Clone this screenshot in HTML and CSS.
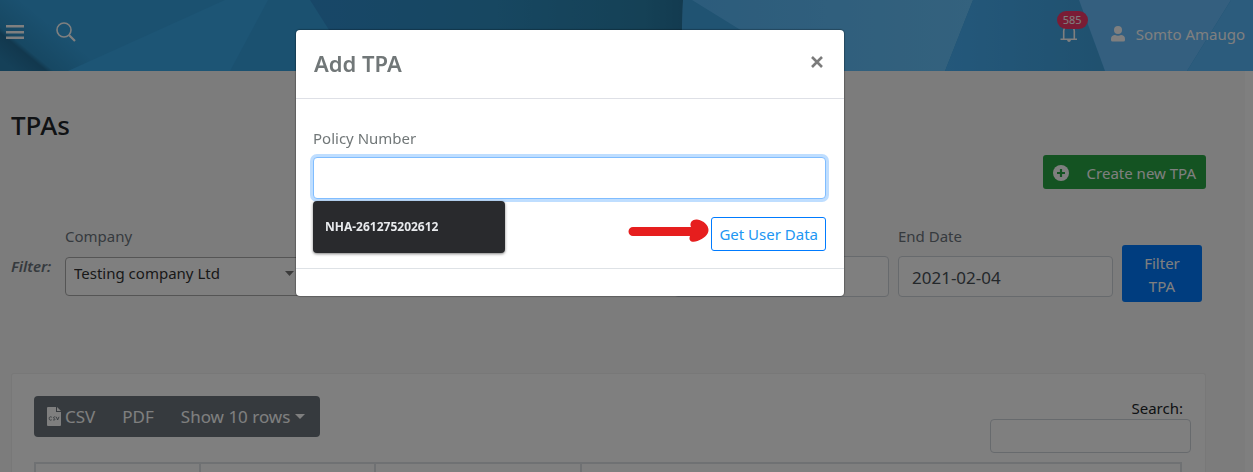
FILE: index.html
```html
<!DOCTYPE html>
<html lang="en">
<head>
<meta charset="utf-8">
<meta name="viewport" content="width=device-width, initial-scale=1">
<title>TPAs</title>
<link rel="stylesheet" href="styles.css">
</head>
<body>
<header class="topbar">
  <svg class="topbar-art" viewBox="0 0 1253 71" preserveAspectRatio="none" aria-hidden="true">
    <defs>
      <linearGradient id="dark"><stop offset="0" stop-color="#308ed0"/><stop offset=".5" stop-color="#2e8ec2"/><stop offset=".9" stop-color="#2a82ac"/><stop offset="1" stop-color="#2676a0"/></linearGradient>
      <linearGradient id="pale"><stop offset="0" stop-color="#58b8f8"/><stop offset="1" stop-color="#68c4fc"/></linearGradient>
      <linearGradient id="blue"><stop offset="0" stop-color="#48b0f6"/><stop offset="1" stop-color="#40a2de"/></linearGradient>
      <linearGradient id="shadow" gradientUnits="userSpaceOnUse" x1="10" y1="66" x2="46" y2="22"><stop offset="0" stop-color="#2a80b0"/><stop offset=".34" stop-color="#24709c"/><stop offset=".42" stop-color="#2e90c6"/><stop offset="1" stop-color="#36a2e0"/></linearGradient>
    </defs>
    <rect width="1253" height="71" fill="#36a2e0"/>
    <path d="M0 0H90V71H0z" fill="url(#shadow)"/>
    <path d="M225 0h43l-38 71H68z" fill="#3aaaea"/>
    <path d="M310 0h373v71H355z" fill="url(#dark)"/>
    <path d="M683 0h290l-28 71H681z" fill="url(#pale)"/>
    <path d="M683 0h9l115 71H681z" fill="#40a6e4"/>
    <path d="M973 0h106l26 71H945z" fill="url(#blue)"/>
    <path d="M1079 0h152l-44 71h-82z" fill="#68beff"/>
    <path d="M1231 0h22v71h-66z" fill="#58b8fa"/>
  </svg>
  <nav class="topbar-tools">
    <button class="icon-button" aria-label="Menu">
      <svg width="18" height="14" viewBox="0 0 18 14" fill="#fff"><path d="M0 0h18v2.400H0zM0 6h18v2.400H0zM0 11.600h18V14H0z"/></svg>
    </button>
    <button class="icon-button" aria-label="Search">
      <svg width="20" height="20" viewBox="0 0 20 20" fill="none" stroke="#fff" stroke-width="1.600"><circle cx="8" cy="8" r="7"/><path d="m13 13 6 6" stroke-width="2.200"/></svg>
    </button>
  </nav>
  <div class="topbar-user">
    <button class="icon-button bell" aria-label="Notifications">
      <svg width="18" height="20" viewBox="0 0 18 20" fill="none" stroke="#fff" stroke-width="1.600"><path d="M.5 15.200h16.500M3.700 15V7a5.300 5.300 0 0 1 10.600 0v8"/><path d="M7 16h4q-.5 2-2 2t-2-2z" fill="#fff" stroke="none"/></svg>
      <span class="badge">585</span>
    </button>
    <a class="user-link" href="#">
      <svg width="14" height="16" viewBox="0 0 14 16" fill="#fff"><circle cx="7" cy="4" r="4"/><path d="M0 13c0-3 2-4 4-4 2 1 4 1 6 0 2 0 4 1 4 4v1q0 1.500-1.500 1.500h-11Q0 15.500 0 14z"/></svg>
      <span>Somto Amaugo</span>
    </a>
  </div>
</header>

<main class="page">
  <h1 class="page-title">TPAs</h1>
  <div class="actions">
    <button class="create-button">
      <svg width="16" height="16" viewBox="0 0 16 16"><circle cx="8" cy="8" r="8" fill="#fff"/><path d="M8 4v8M4 8h8" stroke="#28a745" stroke-width="2.200"/></svg>
      <span>Create new TPA</span>
    </button>
  </div>

  <form class="filters">
    <span class="filters-title">Filter:</span>
    <div class="field company-field">
      <label for="company">Company</label>
      <select id="company" class="company-select"><option>Testing company Ltd</option></select>
    </div>
    <div class="field date-field unlabelled">
      <input class="date-input" type="text" aria-label="From">
    </div>
    <div class="field date-field">
      <label for="end">End Date</label>
      <input id="end" class="date-input" type="text" value="2021-02-04">
    </div>
    <button class="filter-button" type="button">Filter TPA</button>
  </form>

  <section class="card">
    <div class="card-tools">
      <div class="export-group">
        <button class="export-button">
          <svg width="14" height="19" viewBox="0 0 14 19"><path d="M0 1q0-1 1-1h8v5h5v13q0 1-1 1H1q-1 0-1-1z" fill="#fff"/><path d="m10 0 4 4h-4z" fill="#fff"/><g fill="none" stroke="#6c757d" stroke-width=".9"><path d="M4.800 10.200c-2-1-2.600 0-2.600 1.300s.8 2.200 2.500 1.300M8.400 10c-2-.6-2.600 1-1.200 1.500 1.600.6.800 2-1.200 1.300M9.300 9.800l1.300 3.200 1.400-3.200"/></g></svg>
          <span>CSV</span>
        </button>
        <button class="export-button">PDF</button>
        <button class="export-button rows">Show 10 rows <span class="caret"></span></button>
      </div>
      <div class="search">
        <label for="search">Search:</label>
        <input id="search" class="search-input" type="search">
      </div>
    </div>
    <table class="records">
      <thead><tr><th class="col-a"></th><th class="col-b"></th><th class="col-c"></th><th></th></tr></thead>
    </table>
  </section>
</main>

<div class="backdrop">
  <div class="modal" role="dialog" aria-modal="true" aria-labelledby="modal-title">
    <div class="modal-header">
      <h2 class="modal-title" id="modal-title">Add TPA</h2>
      <button class="close" aria-label="Close">
        <svg width="12" height="12" viewBox="0 0 12 12" stroke="#7b7b7b" stroke-width="2.600"><path d="m1 1 10 10M11 1 1 11"/></svg>
      </button>
    </div>
    <div class="modal-body">
      <label class="policy-label" for="policy">Policy Number</label>
      <div class="policy-box">
        <input id="policy" class="policy-input" type="text">
        <div class="suggestions">NHA-261275202612</div>
      </div>
      <div class="modal-actions">
        <svg class="arrow" width="82" height="26" viewBox="0 0 82 26" aria-hidden="true"><path d="M5 9h58C61 4 65 1 69 1.500c7 1 11.500 6 11.500 10.500 0 5-5 8.500-11 11C64 25 60 23 62 18H5a4.500 4.500 0 0 1 0-9z" fill="#e61e1e"/></svg>
        <button class="get-button">Get User Data</button>
      </div>
    </div>
    <div class="modal-footer"></div>
  </div>
</div>
</body>
</html>
```
FILE: styles.css
```css
* { box-sizing: border-box; }
body {
  display: flex;
  flex-direction: column;
  margin: 0;
  height: 100vh;
  overflow: hidden;
  background: #fff;
  color: #212529;
  font: 15px/22px "Noto Sans", "Segoe UI", sans-serif;
}
button, input, select { font: inherit; color: inherit; margin: 0; }
button { cursor: pointer; }

/* Top bar */
.topbar {
  position: relative;
  flex: none;
  height: 71px;
  display: flex;
  justify-content: space-between;
  padding: 0 8px 0 6px;
  color: #fff;
}
.topbar-art { position: absolute; inset: 0; width: 100%; height: 100%; }
.topbar-tools, .topbar-user { position: relative; display: flex; align-items: center; height: 64px; }
.topbar-tools { gap: 32px; }
.topbar-user { height: 68px; gap: 33px; }
.icon-button { display: flex; padding: 0; border: 0; background: none; }
.bell { position: relative; }
.badge {
  position: absolute;
  left: -3px;
  top: -13px;
  padding: 0 6px;
  border-radius: 9px;
  background: #f5386a;
  color: #fff;
  font-size: 11px;
  line-height: 18px;
}
.user-link { display: flex; align-items: center; gap: 11px; color: #fff; text-decoration: none; }

/* Page */
.page {
  display: flex;
  flex-direction: column;
  flex: 1;
  min-height: 0;
  overflow: hidden;
  margin-right: 8px;
  padding: 38px 39px 0 11px;
  background: #f9f9f9;
}
.page-title { margin: 0; font-size: 26px; line-height: 32px; font-weight: 500; }
.actions { display: flex; justify-content: flex-end; padding-top: 14px; }
.create-button {
  display: flex;
  align-items: center;
  gap: 18px;
  height: 34px;
  padding: 2px 10px 0;
  border: 0;
  border-radius: 3px;
  background: #28a745;
  color: #fff;
}

/* Filters */
.filters { display: flex; align-items: flex-start; padding: 36px 4px 0 0; color: #6c757d; gap: 9px; }
.filters-title { width: 45px; padding-top: 30px; font-weight: 600; font-style: italic; }
.field { display: flex; flex-direction: column; min-width: 0; }
.unlabelled { padding-top: 22px; }
.company-field { width: 240px; margin-right: auto; }
.company-select {
  height: 39px;
  margin-top: 10px;
  padding: 0 8px 7px;
  appearance: none;
  border: 1px solid #aaa;
  border-radius: 4px;
  background: #fff url("data:image/svg+xml,%3Csvg xmlns='http://www.w3.org/2000/svg' width='9' height='5'%3E%3Cpath d='M0 0h9L4.500 5z' fill='%23777'/%3E%3C/svg%3E") no-repeat right 10px top 13px;
  color: #333;
}
.date-field { width: 215px; }
.date-input {
  width: 100%;
  height: 41px;
  margin-top: 9px;
  padding: 1px 13px 0;
  border: 1px solid #ced4da;
  border-radius: 4px;
  background: #fff;
  color: #495057;
  font-size: 17px;
}
.filter-button {
  width: 80px;
  height: 57px;
  margin-top: 20px;
  padding: 2px 18px 0;
  border: 0;
  border-radius: 3px;
  background: #007bff;
  color: #fff;
  line-height: 23px;
}

/* Records */
.card {
  flex: 1;
  min-height: 0;
  overflow: hidden;
  margin-top: 71px;
  padding: 22px 14px 0 22px;
  border: 1px solid #f0f0f0;
  border-bottom: 0;
  border-radius: 3px 3px 0 0;
  background: #fff;
}
.card-tools { display: flex; justify-content: space-between; }
.export-group { display: flex; height: 41px; border-radius: 4px; background: #6c757d; }
.export-button {
  display: flex;
  align-items: center;
  gap: 4px;
  padding: 0 14px 0 13px;
  border: 0;
  background: none;
  color: #fff;
  font-size: 17px;
}
.rows { gap: 5px; padding-right: 15px; }
.caret { border: 5px solid transparent; border-top-color: #fff; border-bottom: 0; }
.search { display: flex; flex-direction: column; align-items: flex-end; padding-top: 1px; }
.search label { padding-right: 8px; }
.search-input { width: 201px; height: 34px; border: 1px solid #ced4da; border-radius: 4px; background: #fff; }
.records { width: calc(100% - 9px); margin-top: 9px; border-collapse: collapse; table-layout: fixed; }
.records th { height: 50px; border: 2px solid #dee2e6; }
.col-a { width: 165px; }
.col-b { width: 175px; }
.col-c { width: 206px; }

/* Dialog */
.backdrop {
  position: fixed;
  inset: 0;
  display: flex;
  align-items: flex-start;
  justify-content: center;
  padding: 30px 113px 0 0;
  background: rgba(0, 0, 0, .5);
}
.modal {
  width: 548px;
  border-radius: 4px;
  background: #fff;
  box-shadow: 0 0 1px 1px rgba(0, 0, 0, .25);
  color: #717778;
}
.modal-header {
  display: flex;
  justify-content: space-between;
  align-items: center;
  padding: 17px 21px 19px 18px;
  border-bottom: 1px solid #dee0e6;
}
.modal-title { margin: 0; font-size: 22px; line-height: 32px; font-weight: 600; }
.close { display: flex; padding: 0; margin-bottom: 2px; border: 0; background: none; }
.modal-body { padding: 28px 18px 17px 17px; }
.policy-label { display: block; }
.policy-box { position: relative; margin-top: 8px; }
.policy-input {
  display: block;
  width: 100%;
  height: 42px;
  padding: 0 12px;
  border: 1px solid #80bdff;
  border-radius: 4px;
  outline: 0;
  box-shadow: 0 0 0 3px #bfdeff;
}
.suggestions {
  position: absolute;
  left: 0;
  top: 44px;
  width: 192px;
  padding: 15px 12px;
  border-radius: 4px;
  background: #292a2d;
  box-shadow: 0 1px 3px rgba(0, 0, 0, .5);
  color: #e8eaed;
  font-size: 12px;
  font-weight: 700;
}
.modal-actions { display: flex; justify-content: flex-end; align-items: flex-start; padding-top: 18px; }
.arrow { margin: 1px 1px 0 0; }
.get-button {
  height: 34px;
  padding: 0 7px;
  border: 1px solid #007bff;
  border-radius: 3px;
  background: #fff;
  color: #2196f3;
}
.modal-footer { height: 28px; border-top: 1px solid #dee2e6; }
```
